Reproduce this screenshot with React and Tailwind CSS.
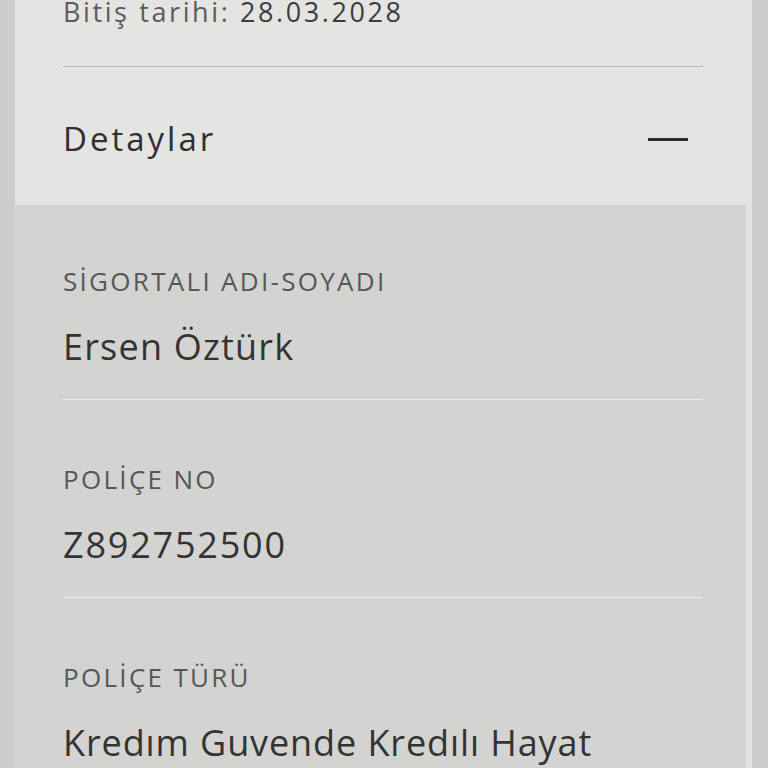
export default function App() {
  const items = [
    { label: "SİGORTALI ADI-SOYADI", value: "Ersen Öztürk", track: "tracking-[1.2px]" },
    { label: "POLİÇE NO", value: "Z892752500", track: "tracking-[1.8px]" },
    { label: "POLİÇE TÜRÜ", value: "Kredım Guvende Kredılı Hayat", track: "tracking-[0.9px]" },
  ];

  return (
    <div
      className="w-[768px] h-[768px] overflow-hidden bg-[#cdcdcb] flex"
      style={{ fontFamily: "'Open Sans', 'Noto Sans', sans-serif" }}
    >
      <div className="ml-[15px] w-[737px] h-full bg-[#e4e4e2] flex flex-col">
        {/* top section */}
        <div className="pl-[48px] pr-[49px]">
          <div className="-mt-[3px] text-[27px] leading-[30px] tracking-[2.6px] text-[#5b5b5b] whitespace-nowrap">
            Bitiş tarihi: <span className="font-medium text-[#3c3c3c]">28.03.2028</span>
          </div>
          <div className="mt-[39px] h-px bg-[#b4b4b2]" />
          <div className="mt-[52px] flex items-center justify-between">
            <span className="text-[33px] leading-[40px] font-medium tracking-[3px] text-[#2f2f2f]">
              Detaylar
            </span>
            <span className="mr-[15px] block w-[40px] h-[3px] bg-[#2c2a28]" />
          </div>
        </div>

        {/* details panel */}
        <div className="mt-[46px] mr-[6px] flex-1 bg-[#d3d3d2] pl-[48px] pr-[43px] pt-[61px]">
          {items.map((it, i) => (
            <div key={i} className={i === 0 ? "" : "mt-[64px]"}>
              <div className="text-[26px] leading-[30px] tracking-[2.3px] text-[#565656] whitespace-nowrap">
                {it.label}
              </div>
              <div
                className={`mt-[29px] text-[36px] leading-[44px] font-medium text-[#333333] whitespace-nowrap ${it.track}`}
              >
                {it.value}
              </div>
              {i < items.length - 1 && (
                <div className="mt-[30px] h-px bg-[#ececeb]" />
              )}
            </div>
          ))}
        </div>
      </div>
    </div>
  );
}
